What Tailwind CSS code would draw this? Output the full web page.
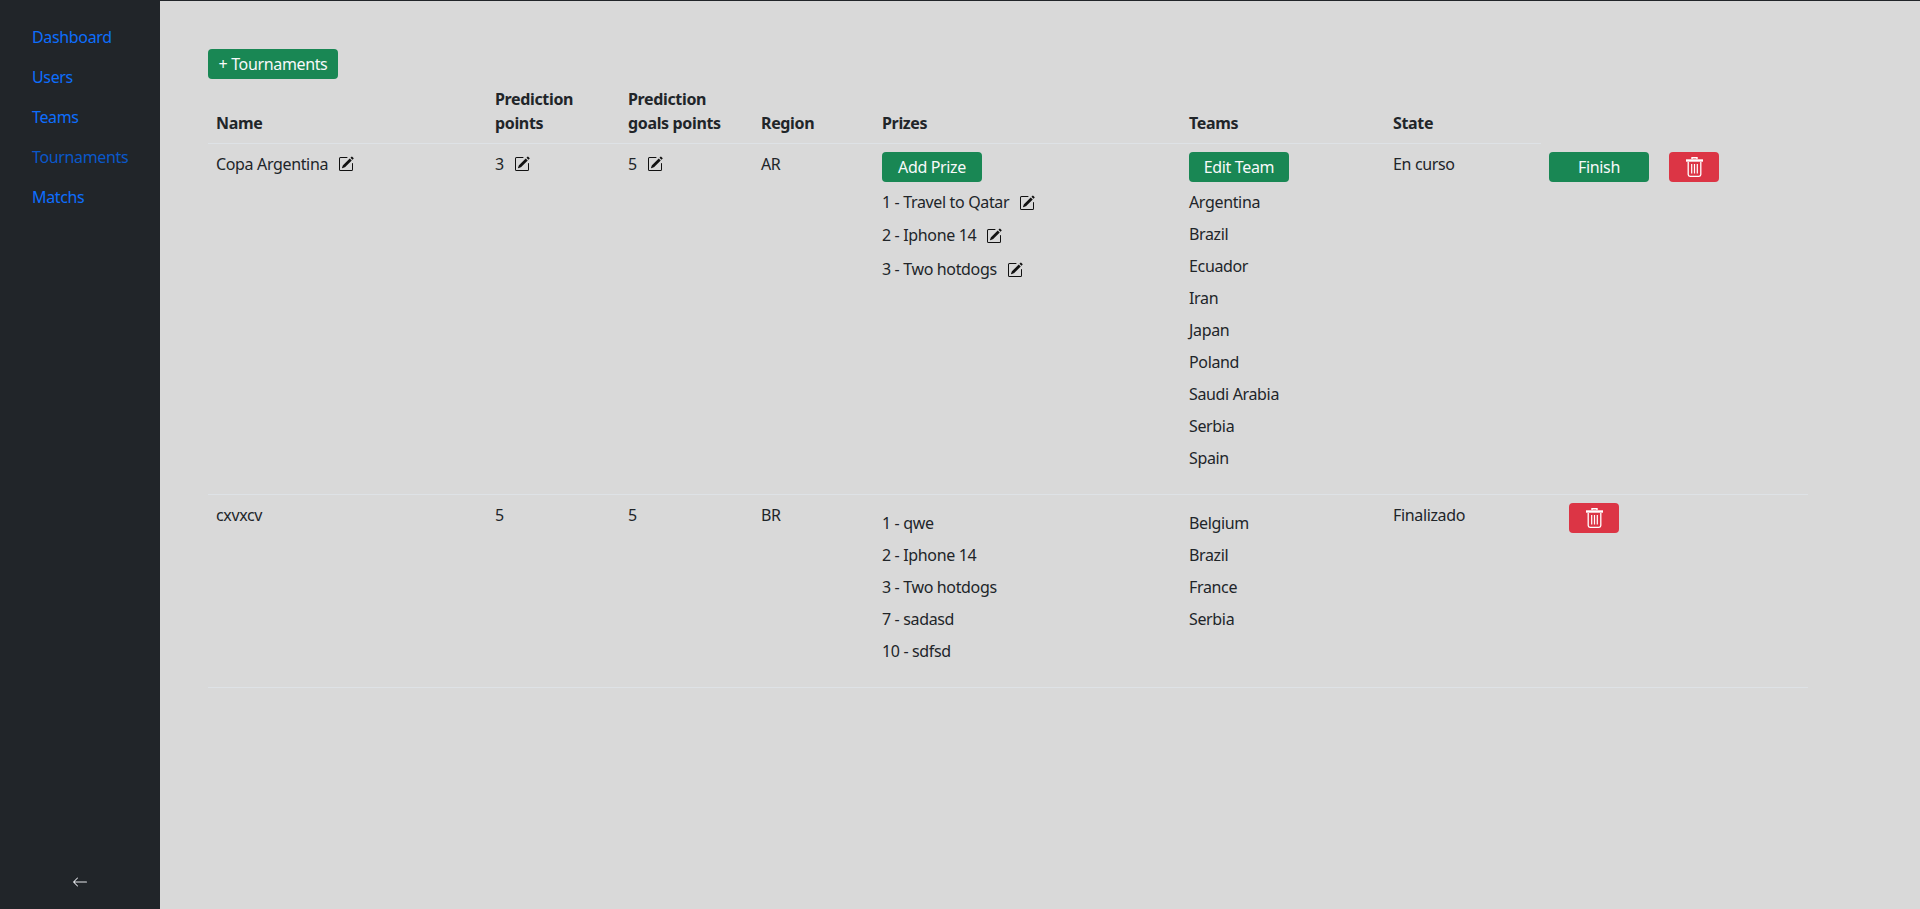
<!DOCTYPE html>
<html lang="en" class="h-screen overflow-hidden">
<head>
  <meta charset="UTF-8">
  <meta name="viewport" content="width=device-width, initial-scale=1.0">
  <title>Tournaments</title>
  <script src="https://cdn.jsdelivr.net/npm/@tailwindcss/browser@4"></script>
</head>
<body class="h-screen overflow-hidden bg-[#d9d9d9] font-['Noto_Sans',sans-serif] text-base leading-6 tracking-[-0.35px] text-[#212529]">
  <div class="flex h-full overflow-hidden border-t border-[#212529]">
    <!-- Sidebar -->
    <aside class="flex w-[160px] shrink-0 flex-col justify-between bg-[#212529] pt-4 pb-[19px]">
      <nav class="flex flex-col text-[#0d6efd]">
        <a href="#" class="px-8 py-2">Dashboard</a>
        <a href="#" class="px-8 py-2">Users</a>
        <a href="#" class="px-8 py-2">Teams</a>
        <a href="#" class="px-8 py-2 text-[#0a58ca]">Tournaments</a>
        <a href="#" class="px-8 py-2">Matchs</a>
      </nav>
      <button class="flex justify-center">
        <svg class="h-4 w-4" viewBox="0 0 16 16" fill="#e5e7eb"><path fill-rule="evenodd" d="M15 8a.5.5 0 0 0-.5-.5H2.707l3.147-3.146a.5.5 0 1 0-.708-.708l-4 4a.5.5 0 0 0 0 .708l4 4a.5.5 0 0 0 .708-.708L2.707 8.500H14.500A.5.5 0 0 0 15 8z"/></svg>
      </button>
    </aside>

    <!-- Main -->
    <main class="flex-1 pt-12 pl-12">
      <button class="block h-[30px] w-[130px] rounded-[4px] bg-[#198754] text-center text-[#f8f9fa]">+ Tournaments</button>

      <table class="w-[1600px] table-fixed border-collapse text-left">
        <colgroup>
          <col class="w-[279px]"><col class="w-[133px]"><col class="w-[133px]"><col class="w-[121px]"><col class="w-[307px]"><col class="w-[204px]"><col class="w-[156px]"><col>
        </colgroup>
        <thead>
          <tr class="align-bottom font-bold">
            <th class="border-b border-[#dee2e6] p-2">Name</th>
            <th class="border-b border-[#dee2e6] p-2">Prediction points</th>
            <th class="border-b border-[#dee2e6] p-2">Prediction goals points</th>
            <th class="border-b border-[#dee2e6] p-2">Region</th>
            <th class="border-b border-[#dee2e6] p-2">Prizes</th>
            <th class="border-b border-[#dee2e6] p-2">Teams</th>
            <th class="border-b border-[#dee2e6] p-2">State</th>
            <th class="p-2"></th>
          </tr>
        </thead>
        <tbody>
          <tr class="align-top">
            <td class="border-b border-[#dee2e6] p-2">
              <div class="flex items-center gap-[10px]">Copa Argentina
                <svg class="h-4 w-4 text-[#111]" viewBox="0 0 16 16" fill="currentColor"><path d="M15.502 1.94a.5.5 0 0 1 0 .706L14.459 3.69l-2-2L13.502.646a.5.5 0 0 1 .707 0l1.293 1.293zm-1.75 2.456-2-2L4.939 9.21a.5.5 0 0 0-.121.196l-.805 2.414a.25.25 0 0 0 .316.316l2.414-.805a.5.5 0 0 0 .196-.12l6.813-6.814z"/><path fill-rule="evenodd" d="M1 13.5A1.5 1.5 0 0 0 2.5 15h11a1.5 1.5 0 0 0 1.5-1.5v-6a.5.5 0 0 0-1 0v6a.5.5 0 0 1-.5.5h-11a.5.5 0 0 1-.5-.5v-11a.5.5 0 0 1 .5-.5H9a.5.5 0 0 0 0-1H2.5A1.5 1.5 0 0 0 1 2.5v11z"/></svg>
              </div>
            </td>
            <td class="border-b border-[#dee2e6] p-2">
              <div class="flex items-center gap-[10px]">3
                <svg class="h-4 w-4 text-[#111]" viewBox="0 0 16 16" fill="currentColor"><path d="M15.502 1.94a.5.5 0 0 1 0 .706L14.459 3.69l-2-2L13.502.646a.5.5 0 0 1 .707 0l1.293 1.293zm-1.75 2.456-2-2L4.939 9.21a.5.5 0 0 0-.121.196l-.805 2.414a.25.25 0 0 0 .316.316l2.414-.805a.5.5 0 0 0 .196-.12l6.813-6.814z"/><path fill-rule="evenodd" d="M1 13.5A1.5 1.5 0 0 0 2.5 15h11a1.5 1.5 0 0 0 1.5-1.5v-6a.5.5 0 0 0-1 0v6a.5.5 0 0 1-.5.5h-11a.5.5 0 0 1-.5-.5v-11a.5.5 0 0 1 .5-.5H9a.5.5 0 0 0 0-1H2.5A1.5 1.5 0 0 0 1 2.5v11z"/></svg>
              </div>
            </td>
            <td class="border-b border-[#dee2e6] p-2">
              <div class="flex items-center gap-[10px]">5
                <svg class="h-4 w-4 text-[#111]" viewBox="0 0 16 16" fill="currentColor"><path d="M15.502 1.94a.5.5 0 0 1 0 .706L14.459 3.69l-2-2L13.502.646a.5.5 0 0 1 .707 0l1.293 1.293zm-1.75 2.456-2-2L4.939 9.21a.5.5 0 0 0-.121.196l-.805 2.414a.25.25 0 0 0 .316.316l2.414-.805a.5.5 0 0 0 .196-.12l6.813-6.814z"/><path fill-rule="evenodd" d="M1 13.5A1.5 1.5 0 0 0 2.5 15h11a1.5 1.5 0 0 0 1.5-1.5v-6a.5.5 0 0 0-1 0v6a.5.5 0 0 1-.5.5h-11a.5.5 0 0 1-.5-.5v-11a.5.5 0 0 1 .5-.5H9a.5.5 0 0 0 0-1H2.5A1.5 1.5 0 0 0 1 2.5v11z"/></svg>
              </div>
            </td>
            <td class="border-b border-[#dee2e6] p-2">AR</td>
            <td class="border-b border-[#dee2e6] p-2">
              <button class="mb-2 block h-[30px] w-[100px] rounded-[4px] bg-[#198754] text-[#f8f9fa]">Add Prize</button>
              <div class="flex h-[33px] items-start gap-[10px]">1 - Travel to Qatar
                <svg class="mt-[5px] h-4 w-4 text-[#111]" viewBox="0 0 16 16" fill="currentColor"><path d="M15.502 1.94a.5.5 0 0 1 0 .706L14.459 3.69l-2-2L13.502.646a.5.5 0 0 1 .707 0l1.293 1.293zm-1.75 2.456-2-2L4.939 9.21a.5.5 0 0 0-.121.196l-.805 2.414a.25.25 0 0 0 .316.316l2.414-.805a.5.5 0 0 0 .196-.12l6.813-6.814z"/><path fill-rule="evenodd" d="M1 13.5A1.5 1.5 0 0 0 2.5 15h11a1.5 1.5 0 0 0 1.5-1.5v-6a.5.5 0 0 0-1 0v6a.5.5 0 0 1-.5.5h-11a.5.5 0 0 1-.5-.5v-11a.5.5 0 0 1 .5-.5H9a.5.5 0 0 0 0-1H2.5A1.5 1.5 0 0 0 1 2.5v11z"/></svg>
              </div>
              <div class="flex h-[34px] items-start gap-[10px]">2 - Iphone 14
                <svg class="mt-[5px] h-4 w-4 text-[#111]" viewBox="0 0 16 16" fill="currentColor"><path d="M15.502 1.94a.5.5 0 0 1 0 .706L14.459 3.69l-2-2L13.502.646a.5.5 0 0 1 .707 0l1.293 1.293zm-1.75 2.456-2-2L4.939 9.21a.5.5 0 0 0-.121.196l-.805 2.414a.25.25 0 0 0 .316.316l2.414-.805a.5.5 0 0 0 .196-.12l6.813-6.814z"/><path fill-rule="evenodd" d="M1 13.5A1.5 1.5 0 0 0 2.5 15h11a1.5 1.5 0 0 0 1.5-1.5v-6a.5.5 0 0 0-1 0v6a.5.5 0 0 1-.5.5h-11a.5.5 0 0 1-.5-.5v-11a.5.5 0 0 1 .5-.5H9a.5.5 0 0 0 0-1H2.5A1.5 1.5 0 0 0 1 2.5v11z"/></svg>
              </div>
              <div class="flex h-[33px] items-start gap-[10px]">3 - Two hotdogs
                <svg class="mt-[5px] h-4 w-4 text-[#111]" viewBox="0 0 16 16" fill="currentColor"><path d="M15.502 1.94a.5.5 0 0 1 0 .706L14.459 3.69l-2-2L13.502.646a.5.5 0 0 1 .707 0l1.293 1.293zm-1.75 2.456-2-2L4.939 9.21a.5.5 0 0 0-.121.196l-.805 2.414a.25.25 0 0 0 .316.316l2.414-.805a.5.5 0 0 0 .196-.12l6.813-6.814z"/><path fill-rule="evenodd" d="M1 13.5A1.5 1.5 0 0 0 2.5 15h11a1.5 1.5 0 0 0 1.5-1.5v-6a.5.5 0 0 0-1 0v6a.5.5 0 0 1-.5.5h-11a.5.5 0 0 1-.5-.5v-11a.5.5 0 0 1 .5-.5H9a.5.5 0 0 0 0-1H2.5A1.5 1.5 0 0 0 1 2.5v11z"/></svg>
              </div>
            </td>
            <td class="border-b border-[#dee2e6] p-2">
              <button class="mb-2 block h-[30px] w-[100px] rounded-[4px] bg-[#198754] text-[#f8f9fa]">Edit Team</button>
              <div class="pb-2">
                <p class="mb-2">Argentina</p>
                <p class="mb-2">Brazil</p>
                <p class="mb-2">Ecuador</p>
                <p class="mb-2">Iran</p>
                <p class="mb-2">Japan</p>
                <p class="mb-2">Poland</p>
                <p class="mb-2">Saudi Arabia</p>
                <p class="mb-2">Serbia</p>
                <p class="mb-2">Spain</p>
              </div>
            </td>
            <td class="border-b border-[#dee2e6] p-2">En curso</td>
            <td class="border-b border-[#dee2e6] p-2">
              <div class="flex">
                <button class="h-[30px] w-[100px] rounded-[4px] bg-[#198754] text-[#f8f9fa]">Finish</button>
                <button class="ml-5 flex h-[30px] w-[50px] items-center justify-center rounded-[4px] bg-[#dc3545]">
                  <svg class="h-5 w-[17px]" viewBox="0 0 17 20" fill="none" stroke="#fff"><path d="M0 3.5h17" stroke-width="2.4"/><path d="M6 2V.8h5V2" stroke-width="1.4"/><path d="M2.200 5v12.500a1.800 1.800 0 0 0 1.800 1.800h9a1.800 1.800 0 0 0 1.800-1.800V5" stroke-width="1.300"/><path d="M5.700 7v9.500M8.500 7v9.500M11.300 7v9.500" stroke-width="1.200"/></svg>
                </button>
              </div>
            </td>
          </tr>
          <tr class="align-top">
            <td class="border-b border-[#dee2e6] p-2">cxvxcv</td>
            <td class="border-b border-[#dee2e6] p-2">5</td>
            <td class="border-b border-[#dee2e6] p-2">5</td>
            <td class="border-b border-[#dee2e6] p-2">BR</td>
            <td class="border-b border-[#dee2e6] p-2">
              <div class="pt-2 pb-2">
                <p class="mb-2">1 - qwe</p>
                <p class="mb-2">2 - Iphone 14</p>
                <p class="mb-2">3 - Two hotdogs</p>
                <p class="mb-2">7 - sadasd</p>
                <p class="mb-2">10 - sdfsd</p>
              </div>
            </td>
            <td class="border-b border-[#dee2e6] p-2">
              <div class="pt-2">
                <p class="mb-2">Belgium</p>
                <p class="mb-2">Brazil</p>
                <p class="mb-2">France</p>
                <p class="mb-2">Serbia</p>
              </div>
            </td>
            <td class="border-b border-[#dee2e6] p-2">Finalizado</td>
            <td class="border-b border-[#dee2e6] p-2">
              <button class="ml-5 flex h-[30px] w-[50px] items-center justify-center rounded-[4px] bg-[#dc3545]">
                <svg class="h-5 w-[17px]" viewBox="0 0 17 20" fill="none" stroke="#fff"><path d="M0 3.5h17" stroke-width="2.4"/><path d="M6 2V.8h5V2" stroke-width="1.4"/><path d="M2.200 5v12.500a1.800 1.800 0 0 0 1.800 1.800h9a1.800 1.800 0 0 0 1.800-1.800V5" stroke-width="1.300"/><path d="M5.700 7v9.500M8.500 7v9.500M11.300 7v9.500" stroke-width="1.200"/></svg>
              </button>
            </td>
          </tr>
        </tbody>
      </table>
    </main>
  </div>
</body>
</html>
